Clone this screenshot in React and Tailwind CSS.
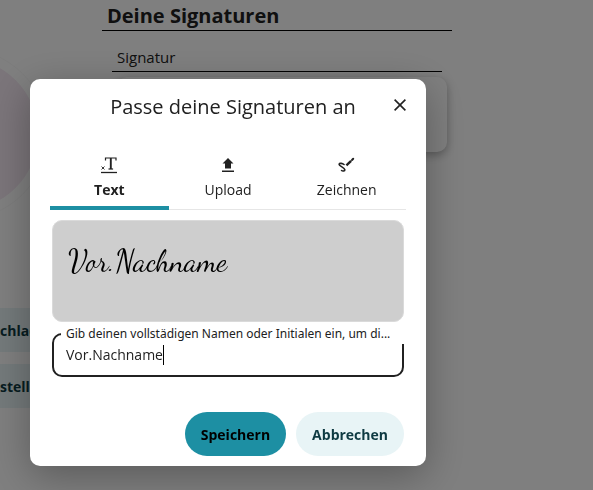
import { useState } from "react"
import clsx from "clsx"

/* ================= ICONS ================= */

function TextIcon() {
  return (
    <svg width="18" height="18" viewBox="0 0 18 18" fill="none" stroke="currentColor" aria-hidden="true">
      <path d="M5.500 4.500V2h10.500v2.500" strokeWidth="1.200" />
      <path d="M10.800 2v11" strokeWidth="1.900" />
      <path d="M8.500 13h4.600" strokeWidth="1.200" />
      <path d="M1.500 10.500l3 3M4.500 10.500l-3 3" strokeWidth="0.9" />
      <path d="M1 16.500h16" strokeWidth="1.300" />
    </svg>
  )
}

function UploadIcon() {
  return (
    <svg width="18" height="18" viewBox="0 0 18 18" fill="currentColor" aria-hidden="true">
      <path d="M9 2l5.500 5.600h-2.500v4.900H6V7.600H3.500z" />
      <path d="M3 14.500h12V16H3z" />
    </svg>
  )
}

function DrawIcon() {
  return (
    <svg width="18" height="18" viewBox="0 0 18 18" fill="none" stroke="currentColor" strokeLinecap="round" aria-hidden="true">
      <path d="M6 8.500C4.500 7.300 1.500 6.900 1.100 8.200c-.4 1.600 5.400 3.200 5.700 5.500.2 1.500-2.300 1.700-3.200.8" strokeWidth="1.600" />
      <path d="M8.400 9.300l4.700-4.400" strokeWidth="2.400" strokeLinecap="butt" />
      <path d="M14 4l1.200-1.200" strokeWidth="2" />
    </svg>
  )
}

function CloseIcon() {
  return (
    <svg width="12" height="12" viewBox="0 0 12 12" fill="none" stroke="currentColor" strokeWidth="1.600" aria-hidden="true">
      <path d="M.6.6l10.800 10.800M11.400.6L.6 11.400" />
    </svg>
  )
}

const tabs = [
  { id: "text", label: "Text", Icon: TextIcon },
  { id: "upload", label: "Upload", Icon: UploadIcon },
  { id: "draw", label: "Zeichnen", Icon: DrawIcon }
]

/* ================= PAGE ================= */

export default function App() {

  const [tab, setTab] = useState("text")
  const [name, setName] = useState("Vor.Nachname")

  return (
    <div className="min-h-screen bg-white font-['Segoe_UI','Open_Sans',sans-serif] text-[#212121]">

      <ProfilePage />

      {/* ================= MODAL ================= */}

      <div className="fixed inset-0 flex items-start overflow-hidden bg-black/50 pt-[79px] pl-[30px]">

        <section
          role="dialog"
          aria-modal="true"
          aria-labelledby="modal-title"
          className="w-full max-w-[396px] rounded-[10px] bg-white px-5 pb-[10px] shadow-[0_10px_40px_rgba(0,0,0,0.3)]"
        >

          <header className="flex h-14 items-center">
            <h2 id="modal-title" className="flex-1 pl-[30px] text-center text-[20px] leading-7">
              Passe deine Signaturen an
            </h2>
            <button type="button" aria-label="Schließen" className="flex h-8 w-5 items-center justify-end pb-1">
              <CloseIcon />
            </button>
          </header>

          <div role="tablist" className="mt-4 flex border-b border-[#e6e6e6]">
            {tabs.map(({ id, label, Icon }) => (
              <button
                key={id}
                type="button"
                role="tab"
                aria-selected={tab === id}
                onClick={() => setTab(id)}
                className={clsx(
                  "-mb-px flex flex-1 flex-col items-center gap-1 border-b-4 pt-[5px] text-[14px] leading-6",
                  tab === id ? "border-[#1d8fa3] font-bold" : "border-transparent"
                )}
              >
                <Icon />
                <span className="pb-1">{label}</span>
              </button>
            ))}
          </div>

          <form className="px-[2px] pt-[10px]" onSubmit={(e) => e.preventDefault()}>

            <div className="h-[102px] rounded-[10px] border border-[#dadada] bg-[#cecece] px-[15px] pt-5">
              <p className="font-['Dancing_Script','Liberation_Serif',cursive] text-[30px] leading-10 text-black">
                {name}
              </p>
            </div>

            <div className="relative mt-[11px] flex h-11 items-center rounded-[10px] border-2 border-[#212121] px-3">
              <label
                htmlFor="signature-name"
                className="absolute -top-[11px] -right-[2px] left-[7px] bg-white pl-[5px] font-['Noto_Sans',sans-serif] text-[12px] leading-5 whitespace-nowrap"
              >
                Gib deinen vollstädigen Namen oder Initialen ein, um di...
              </label>
              <input
                id="signature-name"
                type="text"
                value={name}
                onChange={(e) => setName(e.target.value)}
                className="field-sizing-content max-w-full text-[14px] leading-6 caret-transparent outline-none"
              />
              <span aria-hidden="true" className="h-5 w-px bg-black" />
            </div>

            <div className="mt-[35px] flex justify-end gap-[10px]">
              <button type="submit" className="h-11 rounded-full bg-[#1d8fa3] px-4 text-[14px] font-bold text-black">
                Speichern
              </button>
              <button type="button" className="h-11 rounded-full bg-[#e8f4f6] px-4 text-[14px] font-bold text-[#0e3a42]">
                Abbrechen
              </button>
            </div>

          </form>

        </section>

      </div>

    </div>
  )
}

/* ================= BACKGROUND ================= */

function ProfilePage() {

  return (
    <div className="flex">

      <aside className="w-[102px] shrink-0 overflow-hidden pt-[48px]">

        <div className="-ml-[124px] size-[172px] rounded-full border border-[#f8f8f8] p-[9px]">
          <div className="size-full rounded-full bg-[#f6eaf4]" />
        </div>

        <div className="mt-[88px] flex flex-col gap-3 pr-5 text-[14px] font-bold text-[#0e3a42]">
          <button type="button" className="h-11 rounded-r-full bg-[#e8f4f6] text-left">chladen</button>
          <button type="button" className="h-11 rounded-r-full bg-[#e8f4f6] text-left">stellen</button>
        </div>

      </aside>

      <main className="max-w-[350px] flex-1">
        <h1 className="border-b border-black px-[5px] pt-[2px] text-[20px] leading-7 font-bold">Deine Signaturen</h1>
        <div className="px-[10px] pt-[14px]">
          <h2 className="border-b border-black px-[5px] pb-[2px] text-[15px] leading-6">Signatur</h2>
        </div>
        <div className="mt-[5px] mr-[5px] ml-[15px] h-[75px] rounded-[10px] bg-white shadow-[0_3px_10px_rgba(0,0,0,0.3)]" />
      </main>

    </div>
  )
}
